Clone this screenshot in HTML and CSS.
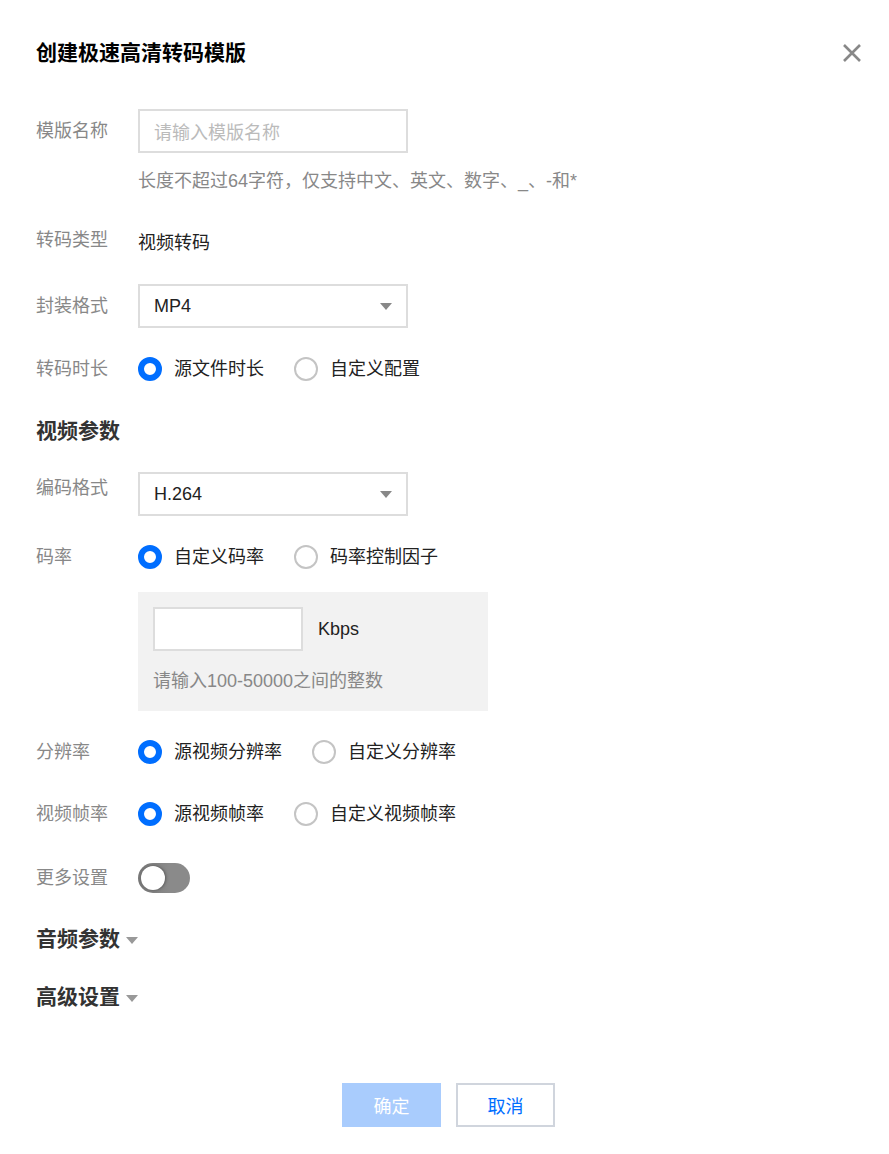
FILE: index.html
```html
<!DOCTYPE html>
<html lang="zh-CN">
<head>
<meta charset="utf-8">
<title>创建极速高清转码模版</title>
<link rel="stylesheet" href="styles.css">
</head>
<body>
<div class="dialog">
  <div class="header">
    <h1 class="title">创建极速高清转码模版</h1>
    <button class="close" aria-label="关闭">
      <svg width="20" height="20" viewBox="0 0 20 20"><path d="M2 2 L18 18 M18 2 L2 18" stroke="#888" stroke-width="2.6" fill="none"/></svg>
    </button>
  </div>

  <div class="row r-name">
    <div class="label">模版名称</div>
    <div class="input input-name"><span class="placeholder">请输入模版名称</span></div>
  </div>
  <div class="hint hint-name">长度不超过64字符，仅支持中文、英文、数字、_、-和*</div>

  <div class="row r-type">
    <div class="label">转码类型</div>
    <div class="value">视频转码</div>
  </div>

  <div class="row r-format">
    <div class="label">封装格式</div>
    <div class="input select"><span>MP4</span><i class="caret"></i></div>
  </div>

  <div class="row r-duration">
    <div class="label">转码时长</div>
    <div class="radios">
      <label class="radio"><i class="dot on"></i>源文件时长</label>
      <label class="radio"><i class="dot"></i>自定义配置</label>
    </div>
  </div>

  <h2 class="section s-video">视频参数</h2>

  <div class="row r-codec">
    <div class="label label-top">编码格式</div>
    <div class="input select"><span>H.264</span><i class="caret"></i></div>
  </div>

  <div class="row r-bitrate">
    <div class="label">码率</div>
    <div class="radios">
      <label class="radio"><i class="dot on"></i>自定义码率</label>
      <label class="radio"><i class="dot"></i>码率控制因子</label>
    </div>
  </div>

  <div class="panel">
    <div class="panel-line">
      <div class="input input-small"></div>
      <span class="unit">Kbps</span>
    </div>
    <div class="hint hint-panel">请输入100-50000之间的整数</div>
  </div>

  <div class="row r-res">
    <div class="label">分辨率</div>
    <div class="radios">
      <label class="radio"><i class="dot on"></i>源视频分辨率</label>
      <label class="radio"><i class="dot"></i>自定义分辨率</label>
    </div>
  </div>

  <div class="row r-fps">
    <div class="label">视频帧率</div>
    <div class="radios">
      <label class="radio"><i class="dot on"></i>源视频帧率</label>
      <label class="radio"><i class="dot"></i>自定义视频帧率</label>
    </div>
  </div>

  <div class="row r-more">
    <div class="label">更多设置</div>
    <div class="switch"><i class="knob"></i></div>
  </div>

  <h2 class="section s-audio">音频参数<i class="scaret"></i></h2>
  <h2 class="section s-adv">高级设置<i class="scaret"></i></h2>

  <div class="footer">
    <button class="btn btn-primary">确定</button>
    <button class="btn btn-default">取消</button>
  </div>
</div>
</body>
</html>
```

FILE: styles.css
```css
html, body {
  margin: 0;
  padding: 0;
  background: #fff;
}
body {
  font-family: "Liberation Sans", "Noto Sans CJK SC", sans-serif;
  font-size: 18px;
  color: #000;
}
.dialog {
  padding: 0 27px 0 36px;
  width: 889px;
  box-sizing: border-box;
}
.header {
  display: flex;
  align-items: center;
  justify-content: space-between;
  margin-top: 38px;
  height: 30px;
}
.title {
  margin: 0;
  font-size: 21px;
  line-height: 30px;
  font-weight: bold;
  color: #000;
}
.close {
  border: 0;
  background: none;
  padding: 0;
  width: 20px;
  height: 20px;
  display: flex;
}
.row {
  display: flex;
  align-items: center;
  min-height: 44px;
}
.label {
  width: 102px;
  flex: none;
  color: #888;
  line-height: 27px;
  padding-top: 1px;
}
.label-top {
  align-self: flex-start;
  padding-top: 3px;
}
.value {
  color: #222;
  padding-top: 1px;
}
.input {
  box-sizing: border-box;
  border: 2px solid #ddd;
  height: 44px;
  background: #fff;
  display: flex;
  align-items: center;
  padding: 0 14px;
}
.input-name, .select {
  width: 270px;
}
.placeholder {
  color: #bbb;
}
.select {
  justify-content: space-between;
  color: #222;
}
.caret {
  width: 0;
  height: 0;
  border-left: 6px solid transparent;
  border-right: 6px solid transparent;
  border-top: 7px solid #888;
}
.hint {
  color: #888;
  line-height: 27px;
}
.hint-name {
  margin: 15px 0 0 102px;
}
.r-name { margin-top: 41px; }
.r-type { margin-top: 23px; }
.r-format { margin-top: 22px; }
.r-duration { margin-top: 19px; }
.section {
  margin: 0;
  font-size: 21px;
  line-height: 30px;
  font-weight: bold;
  color: #333;
  display: flex;
  align-items: center;
}
.s-video { margin-top: 25px; }
.r-codec { margin-top: 26px; }
.r-bitrate { margin-top: 19px; }
.radios {
  display: flex;
  align-items: center;
  gap: 30px;
}
.radio {
  display: flex;
  align-items: center;
  gap: 12px;
  color: #222;
  line-height: 27px;
}
.dot {
  box-sizing: border-box;
  width: 24px;
  height: 24px;
  border-radius: 50%;
  border: 2px solid #c4c4c4;
  background: #fff;
}
.dot.on {
  border: 6px solid #006eff;
}
.panel {
  margin: 13px 0 0 102px;
  width: 350px;
  box-sizing: border-box;
  background: #f2f2f2;
  padding: 15px 15px 16px;
}
.panel-line {
  display: flex;
  align-items: center;
  gap: 15px;
}
.input-small {
  width: 150px;
}
.unit {
  color: #222;
}
.hint-panel {
  margin-top: 17px;
}
.r-res { margin-top: 19px; }
.r-fps { margin-top: 18px; }
.r-more { margin-top: 20px; }
.switch {
  width: 52px;
  height: 30px;
  border-radius: 15px;
  background: linear-gradient(90deg, #777 0%, #8a8a8a 60%, #8a8a8a 100%);
  position: relative;
}
.knob {
  position: absolute;
  left: 3px;
  top: 3px;
  width: 24px;
  height: 24px;
  border-radius: 50%;
  background: #fff;
  box-shadow: 1px 0 3px rgba(0,0,0,.35);
}
.s-audio { margin-top: 24px; }
.s-adv { margin-top: 28px; }
.scaret {
  width: 0;
  height: 0;
  border-left: 6px solid transparent;
  border-right: 6px solid transparent;
  border-top: 7px solid #999;
  margin-left: 6px;
  margin-top: 3px;
}
.footer {
  display: flex;
  justify-content: center;
  gap: 15px;
  margin: 71px -27px 0 -36px;
  padding-left: 8px;
}
.btn {
  box-sizing: border-box;
  width: 99px;
  height: 44px;
  font-family: "Liberation Sans", "Noto Sans CJK SC", sans-serif;
  font-size: 18px;
  padding: 0;
  cursor: pointer;
}
.btn-primary {
  background: #a9ccfd;
  border: 0;
  color: #fff;
}
.btn-default {
  background: #fff;
  border: 2px solid #d0d5dd;
  color: #006eff;
}
```
